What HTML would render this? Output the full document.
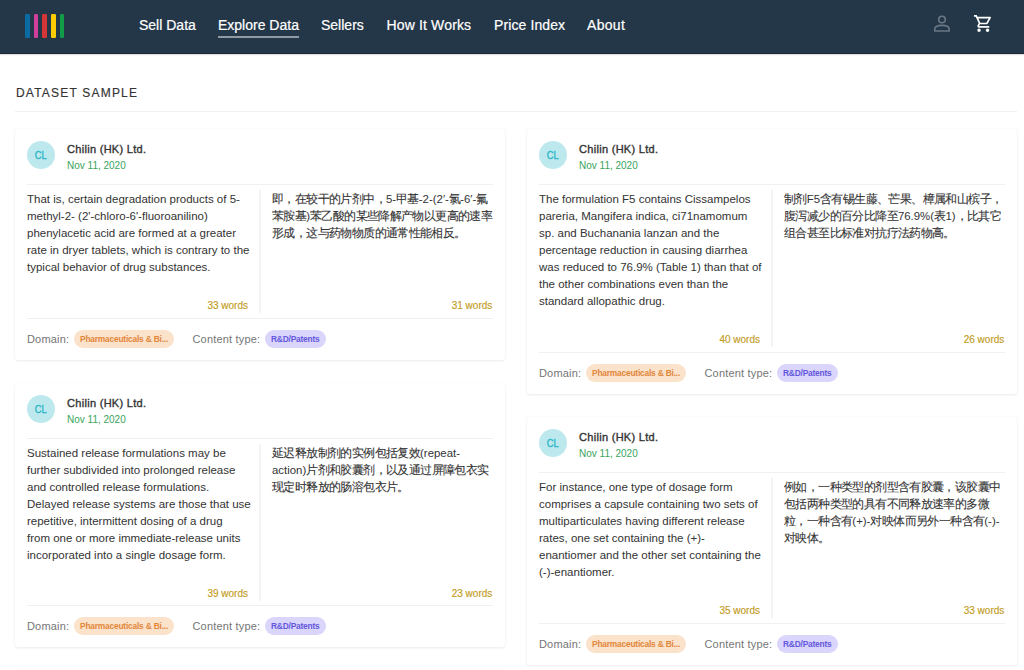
<!DOCTYPE html>
<html><head><meta charset="utf-8">
<style>
*{margin:0;padding:0;box-sizing:border-box}
html,body{width:1024px;height:670px;overflow:hidden;background:#fff;font-family:"Liberation Sans",sans-serif;color:#333}
.hdr{position:absolute;left:0;top:0;width:1024px;height:54px;background:#243748;box-shadow:inset 0 -1px 0 rgba(0,0,0,.22),0 1px 1px rgba(0,0,0,.12)}
.bar{position:absolute;top:14.2px;width:4.5px;height:23.4px;border-radius:1.2px}
.nav{position:absolute;top:-1.6px;height:54px;line-height:54px;font-size:14px;color:#fff;-webkit-text-stroke:.2px #fff;white-space:nowrap}
.nav.act:after{content:"";position:absolute;left:0;right:0;top:37.6px;height:2px;background:#8f9aa4}
.ttl{position:absolute;left:16px;top:86px;font-size:12px;letter-spacing:1.2px;color:#333;-webkit-text-stroke:.15px #333;line-height:14px}
.rule{position:absolute;left:15px;top:111px;width:1002px;height:1px;background:#f0f0f0}
.card{position:absolute;width:490.3px;background:#fff;border-radius:3px;box-shadow:0 1px 3px rgba(0,0,0,.08),0 0 1px rgba(0,0,0,.07)}
.av{position:absolute;left:12.1px;top:11.6px;width:28.3px;height:28.3px;border-radius:50%;background:#bde9ee;color:#27b5c9;font-weight:normal;-webkit-text-stroke:.3px #27b5c9;font-size:10.4px;line-height:30px;text-align:center;text-indent:-1px}.av span{display:inline-block;transform:scaleX(.9)}
.nm{position:absolute;left:52px;top:13.6px;font-size:11px;font-weight:normal;-webkit-text-stroke:.35px #333;letter-spacing:.3px;color:#333;line-height:13px;white-space:nowrap}
.dt{position:absolute;left:52px;top:30.9px;font-size:10px;color:#3aa45c;line-height:12px;white-space:nowrap}
.hr1{position:absolute;left:12px;right:12px;top:55px;height:1px;background:#f0f0f0}
.cols{position:absolute;left:12px;top:61.5px;width:466.3px;display:flex}
.c1{width:221px;padding-right:0}
.vd{width:2px;background:#f4f4f4;margin:-0.5px 11px 0 11px}
.c2{width:220.3px}.c2 .tx{font-size:11.4px}.c2 i{font-style:normal;display:inline-block;width:11.4px;font-size:12px;-webkit-text-stroke:.1px #333}
.tx{font-size:11.5px;line-height:17px;color:#333;white-space:nowrap}
.wc{margin-top:23.5px;height:14px;line-height:14px;font-size:10px;color:#c29c24;-webkit-text-stroke:.15px #c29c24;text-align:right;white-space:nowrap}
.ft{position:absolute;left:12px;right:12px;bottom:0;height:42px;border-top:1px solid #f0f0f0}
.lb{position:absolute;top:12px;line-height:17px;font-size:11px;letter-spacing:.18px;color:#757575;white-space:nowrap}
.chip{position:absolute;top:11.4px;height:17.5px;line-height:18.6px;border-radius:9px;font-size:8.4px;letter-spacing:-0.2px;font-weight:bold;padding:0 6px;white-space:nowrap}
.ph{background:#fbe2cb;color:#e2873a}
.rd{background:#d9d5fb;color:#6558de}
.ico{position:absolute;top:0;left:0}
</style></head><body>
<div class="hdr">
  <div class="bar" style="left:25.1px;background:#0b6ca4"></div>
  <div class="bar" style="left:33.8px;background:#cf3f9b"></div>
  <div class="bar" style="left:42.2px;background:#d33836"></div>
  <div class="bar" style="left:51.4px;background:#ffcc02"></div>
  <div class="bar" style="left:59.9px;background:#139c47"></div>
  <div class="nav" style="left:139px">Sell Data</div>
  <div class="nav act" style="left:218px">Explore Data</div>
  <div class="nav" style="left:321px">Sellers</div>
  <div class="nav" style="left:386.5px;letter-spacing:.15px">How It Works</div>
  <div class="nav" style="left:494px;letter-spacing:.1px">Price Index</div>
  <div class="nav" style="left:587px;letter-spacing:.3px">About</div>
  <svg class="ico" width="1024" height="54" viewBox="0 0 1024 54">
    <circle cx="942" cy="19.5" r="3.3" fill="none" stroke="#6a7784" stroke-width="1.6"/>
    <path d="M934.8 31v-1.9c0-2.4 3.4-3.7 7.2-3.7s7.2 1.3 7.2 3.7v1.9z" fill="none" stroke="#6a7784" stroke-width="1.6"/>
    <g transform="translate(973.1 13.3) scale(0.85)" fill="#fff">
      <path d="M15.55 13c.75 0 1.41-.41 1.75-1.03l3.58-6.49c.37-.66-.11-1.480-.87-1.48H5.21l-.94-2H1v2h2l3.6 7.59-1.350 2.44C4.52 15.37 5.48 17 7 17h12v-2H7l1.1-2h7.45zM6.16 6h12.15l-2.76 5H8.53L6.16 6zM7 18c-1.1 0-1.99.9-1.99 2S5.9 22 7 22s2-.9 2-2-.9-2-2-2zm10 0c-1.1 0-1.99.9-1.99 2s.89 2 1.99 2 2-.9 2-2-.9-2-2-2z"/>
    </g>
  </svg>
</div>
<div class="ttl">DATASET SAMPLE</div>
<div class="rule"></div>

<!-- CARDS -->
<div class="card" style="left:15px;top:129px;height:231px">
  <div class="av"><span>CL</span></div><div class="nm">Chilin (HK) Ltd.</div><div class="dt">Nov 11, 2020</div>
  <div class="hr1"></div>
  <div class="cols">
    <div class="c1"><div class="tx" style="height:85px">That is, certain degradation products of 5-<br>methyl-2- (2&#x27;-chloro-6&#x27;-fluoroanilino)<br>phenylacetic acid are formed at a greater<br>rate in dryer tablets, which is contrary to the<br>typical behavior of drug substances.</div><div class="wc">33 words</div></div>
    <div class="vd"></div>
    <div class="c2"><div class="tx" style="height:85px"><i>即</i><i>，</i><i>在</i><i>较</i><i>干</i><i>的</i><i>片</i><i>剂</i><i>中</i><i>，</i>5-<i>甲</i><i>基</i>-2-(2′-<i>氯</i>-6′-<i>氟</i><br><i>苯</i><i>胺</i><i>基</i>)<i>苯</i><i>乙</i><i>酸</i><i>的</i><i>某</i><i>些</i><i>降</i><i>解</i><i>产</i><i>物</i><i>以</i><i>更</i><i>高</i><i>的</i><i>速</i><i>率</i><br><i>形</i><i>成</i><i>，</i><i>这</i><i>与</i><i>药</i><i>物</i><i>物</i><i>质</i><i>的</i><i>通</i><i>常</i><i>性</i><i>能</i><i>相</i><i>反</i><i>。</i></div><div class="wc">31 words</div></div>
  </div>
  <div class="ft"><span class="lb" style="left:0">Domain:</span><span class="chip ph" style="left:47px">Pharmaceuticals &amp; Bi...</span><span class="lb" style="left:165.5px">Content type:</span><span class="chip rd" style="left:238px">R&amp;D/Patents</span></div>
</div>
<div class="card" style="left:527px;top:129px;height:265px">
  <div class="av"><span>CL</span></div><div class="nm">Chilin (HK) Ltd.</div><div class="dt">Nov 11, 2020</div>
  <div class="hr1"></div>
  <div class="cols">
    <div class="c1"><div class="tx" style="height:119px">The formulation F5 contains Cissampelos<br>pareria, Mangifera indica, ci71namomum<br>sp. and Buchanania lanzan and the<br>percentage reduction in causing diarrhea<br>was reduced to 76.9% (Table 1) than that of<br>the other combinations even than the<br>standard allopathic drug.</div><div class="wc">40 words</div></div>
    <div class="vd"></div>
    <div class="c2"><div class="tx" style="height:119px"><i>制</i><i>剂</i>F5<i>含</i><i>有</i><i>锡</i><i>生</i><i>藤</i><i>、</i><i>芒</i><i>果</i><i>、</i><i>樟</i><i>属</i><i>和</i><i>山</i><i>槟</i><i>子</i><i>，</i><br><i>腹</i><i>泻</i><i>减</i><i>少</i><i>的</i><i>百</i><i>分</i><i>比</i><i>降</i><i>至</i>76.9%(<i>表</i>1)<i>，</i><i>比</i><i>其</i><i>它</i><br><i>组</i><i>合</i><i>甚</i><i>至</i><i>比</i><i>标</i><i>准</i><i>对</i><i>抗</i><i>疗</i><i>法</i><i>药</i><i>物</i><i>高</i><i>。</i></div><div class="wc">26 words</div></div>
  </div>
  <div class="ft"><span class="lb" style="left:0">Domain:</span><span class="chip ph" style="left:47px">Pharmaceuticals &amp; Bi...</span><span class="lb" style="left:165.5px">Content type:</span><span class="chip rd" style="left:238px">R&amp;D/Patents</span></div>
</div>
<div class="card" style="left:15px;top:383px;height:264px">
  <div class="av"><span>CL</span></div><div class="nm">Chilin (HK) Ltd.</div><div class="dt">Nov 11, 2020</div>
  <div class="hr1"></div>
  <div class="cols">
    <div class="c1"><div class="tx" style="height:119px">Sustained release formulations may be<br>further subdivided into prolonged release<br>and controlled release formulations.<br>Delayed release systems are those that use<br>repetitive, intermittent dosing of a drug<br>from one or more immediate-release units<br>incorporated into a single dosage form.</div><div class="wc">39 words</div></div>
    <div class="vd"></div>
    <div class="c2"><div class="tx" style="height:119px"><i>延</i><i>迟</i><i>释</i><i>放</i><i>制</i><i>剂</i><i>的</i><i>实</i><i>例</i><i>包</i><i>括</i><i>复</i><i>效</i>(repeat-<br>action)<i>片</i><i>剂</i><i>和</i><i>胶</i><i>囊</i><i>剂</i><i>，</i><i>以</i><i>及</i><i>通</i><i>过</i><i>屏</i><i>障</i><i>包</i><i>衣</i><i>实</i><br><i>现</i><i>定</i><i>时</i><i>释</i><i>放</i><i>的</i><i>肠</i><i>溶</i><i>包</i><i>衣</i><i>片</i><i>。</i></div><div class="wc">23 words</div></div>
  </div>
  <div class="ft"><span class="lb" style="left:0">Domain:</span><span class="chip ph" style="left:47px">Pharmaceuticals &amp; Bi...</span><span class="lb" style="left:165.5px">Content type:</span><span class="chip rd" style="left:238px">R&amp;D/Patents</span></div>
</div>
<div class="card" style="left:527px;top:417px;height:248px">
  <div class="av"><span>CL</span></div><div class="nm">Chilin (HK) Ltd.</div><div class="dt">Nov 11, 2020</div>
  <div class="hr1"></div>
  <div class="cols">
    <div class="c1"><div class="tx" style="height:102px">For instance, one type of dosage form<br>comprises a capsule containing two sets of<br>multiparticulates having different release<br>rates, one set containing the (+)-<br>enantiomer and the other set containing the<br>(-)-enantiomer.</div><div class="wc">35 words</div></div>
    <div class="vd"></div>
    <div class="c2"><div class="tx" style="height:102px"><i>例</i><i>如</i><i>，</i><i>一</i><i>种</i><i>类</i><i>型</i><i>的</i><i>剂</i><i>型</i><i>含</i><i>有</i><i>胶</i><i>囊</i><i>，</i><i>该</i><i>胶</i><i>囊</i><i>中</i><br><i>包</i><i>括</i><i>两</i><i>种</i><i>类</i><i>型</i><i>的</i><i>具</i><i>有</i><i>不</i><i>同</i><i>释</i><i>放</i><i>速</i><i>率</i><i>的</i><i>多</i><i>微</i><br><i>粒</i><i>，</i><i>一</i><i>种</i><i>含</i><i>有</i>(+)-<i>对</i><i>映</i><i>体</i><i>而</i><i>另</i><i>外</i><i>一</i><i>种</i><i>含</i><i>有</i>(-)-<br><i>对</i><i>映</i><i>体</i><i>。</i></div><div class="wc">33 words</div></div>
  </div>
  <div class="ft"><span class="lb" style="left:0">Domain:</span><span class="chip ph" style="left:47px">Pharmaceuticals &amp; Bi...</span><span class="lb" style="left:165.5px">Content type:</span><span class="chip rd" style="left:238px">R&amp;D/Patents</span></div>
</div>
<div class="card" style="left:15px;top:670px;height:231px"></div>
</body></html>
